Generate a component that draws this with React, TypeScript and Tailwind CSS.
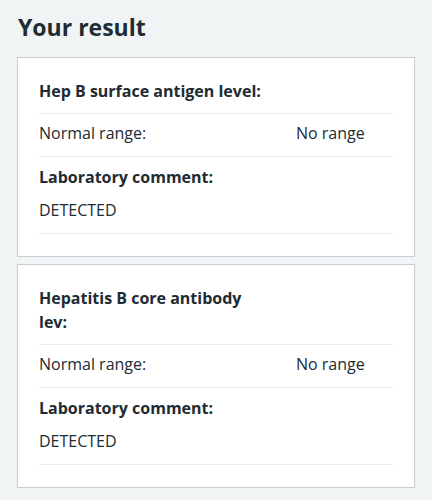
import React from "react"

type Result = {
  name: string
  range: string
  comment: string
}

const results: Result[] = [
  { name: "Hep B surface antigen level:", range: "No range", comment: "DETECTED" },
  { name: "Hepatitis B core antibody lev:", range: "No range", comment: "DETECTED" },
]

const ResultCard = ({ result }: { result: Result }) => (
  <div className="bg-white border border-[#c9d0d4] px-[21px] pt-[21px] pb-[22px]">
    <div className="pb-[10px] border-b border-[#e8edee]">
      <h3 className="font-bold leading-6 max-w-[230px]">{result.name}</h3>
    </div>
    <div className="grid grid-cols-[1fr_97px] pt-[7px] pb-[11px] border-b border-[#e8edee] leading-6">
      <span>Normal range:</span>
      <span>{result.range}</span>
    </div>
    <div className="pt-[8px] pb-[11px] border-b border-[#e8edee] leading-6">
      <p className="font-bold">Laboratory comment:</p>
      <p className="mt-[9px]">{result.comment}</p>
    </div>
  </div>
)

export default function App() {
  return (
    <div
      className="min-h-[500px] bg-[#f0f4f5] px-[17px] pt-[11px] pb-4 text-[16px] text-[#212b32]"
      style={{ fontFamily: '"Open Sans", "Noto Sans", sans-serif' }}
    >
      <h1 className="text-[23px] leading-8 font-bold mb-[14px] ml-[1px]">Your result</h1>
      <div className="flex flex-col gap-[7px]">
        {results.map(r => (
          <ResultCard key={r.name} result={r} />
        ))}
      </div>
    </div>
  )
}
